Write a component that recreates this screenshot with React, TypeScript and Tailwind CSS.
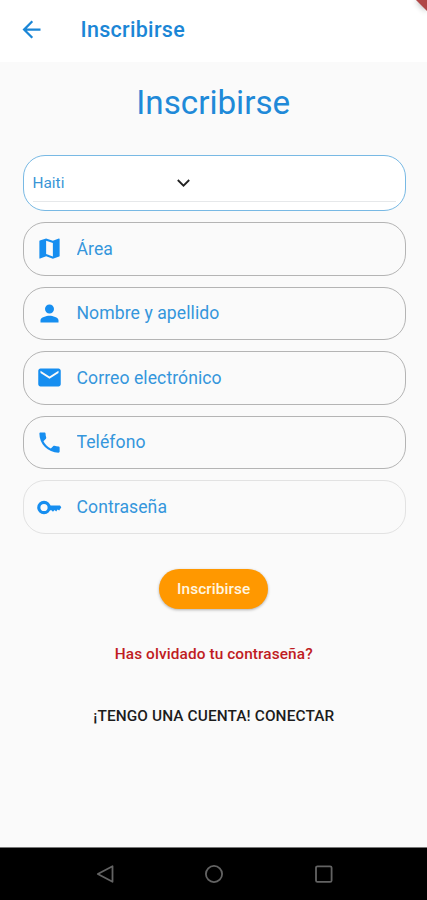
import type { ComponentType } from 'react';
import { MdArrowBack, MdEmail, MdMap, MdPerson, MdPhone } from 'react-icons/md';
import clsx from 'clsx';

interface Field {
  label: string;
  type: string;
  icon: ComponentType<{ className?: string }>;
  faint?: boolean;
}

const FIELDS: Field[] = [
  { label: 'Área', type: 'text', icon: MdMap },
  { label: 'Nombre y apellido', type: 'text', icon: MdPerson },
  { label: 'Correo electrónico', type: 'email', icon: MdEmail },
  { label: 'Teléfono', type: 'tel', icon: MdPhone },
  { label: 'Contraseña', type: 'password', icon: KeyIcon, faint: true },
];

export default function App() {
  return (
    <div className="relative flex h-[900px] w-[427px] flex-col overflow-hidden bg-[#fafafa] font-[Roboto,sans-serif]">
      <header className="flex h-[62px] shrink-0 items-center bg-white pb-[3px] pl-[18px] text-[#1b86d6]">
        <button type="button" aria-label="Atrás">
          <MdArrowBack className="size-[27px]" />
        </button>
        <h1 className="ml-[35.5px] pt-px text-[21.5px] leading-none font-medium tracking-[0.3px]">
          Inscribirse
        </h1>
      </header>
      <DebugRibbon />

      <main className="flex flex-1 flex-col pr-[21px] pl-[22.5px]">
        <h2 className="mt-[23px] pr-[2px] text-center text-[33.2px] leading-[36px] text-[#2089d8]">
          Inscribirse
        </h2>

        <div className="mt-[34px] flex flex-col gap-[11px]">
          <CountrySelect value="Haiti" />
          {FIELDS.map((f) => (
            <FieldRow key={f.label} field={f} />
          ))}
        </div>

        <div className="mt-[35px] flex flex-col items-center pr-px">
          <button
            type="button"
            className="h-[40px] w-[109px] rounded-full bg-[#ff9800] pt-[2px] text-[15.4px] font-medium tracking-[0.08px] text-[#fff6e0] shadow-[0_1px_3px_rgba(0,0,0,0.3)]"
          >
            Inscribirse
          </button>
          <button
            type="button"
            className="mt-[35px] text-[15.4px] leading-[20px] font-medium tracking-[0.1px] text-[#c01c22]"
          >
            Has olvidado tu contraseña?
          </button>
          <button
            type="button"
            className="mt-[42px] text-[15.4px] leading-[20px] font-medium tracking-[0.11px] text-[#1c1c1c]"
          >
            ¡TENGO UNA CUENTA! CONECTAR
          </button>
        </div>
      </main>

      <NavigationBar />
    </div>
  );
}

function CountrySelect({ value }: { value: string }) {
  return (
    <div className="h-[56px] rounded-[22px] border-[1.5px] border-[#78b9e4] bg-white px-[9px]">
      <button
        type="button"
        className="flex h-[46px] w-full items-center border-b border-[#e6e8ea] pt-[10px] text-[15.4px] text-[#3a95d6]"
      >
        <span className="w-[144.5px] pt-px text-left">{value}</span>
        <svg
          className="mb-px w-[13px] text-[#222]"
          viewBox="0 0 13 8"
          fill="none"
          stroke="currentColor"
          strokeWidth="1.8"
        >
          <path d="M0.8 1L6.5 6.7L12.2 1" />
        </svg>
      </button>
    </div>
  );
}

function FieldRow({ field }: { field: Field }) {
  const Icon = field.icon;
  return (
    <label
      className={clsx(
        'flex h-[53.6px] items-center rounded-[22px] border pl-[12.5px]',
        field.faint ? 'border-[#e2e2e2]' : 'border-[#b4b4b4]',
      )}
    >
      <Icon className="size-[27px] shrink-0 text-[#168ef0]" />
      <input
        type={field.type}
        placeholder={field.label}
        className="ml-[13.5px] min-w-0 flex-1 bg-transparent text-[17.6px] tracking-[0.07px] outline-none placeholder:text-[#3496dc]"
      />
    </label>
  );
}

function KeyIcon({ className }: { className?: string }) {
  return (
    <svg className={className} viewBox="0 0 27 27" fill="currentColor">
      <circle cx="8" cy="13.5" r="5.2" fill="none" stroke="currentColor" strokeWidth="3.2" />
      <path d="M13.5 11.5H24L25.3 13.2L23.2 16.6L21.6 15.6L20.2 17.6L18.6 16L17 17.8L15.4 16.2H13.5Z" />
    </svg>
  );
}

/** Corner of the debug banner, only its lower tip is on screen. */
function DebugRibbon() {
  return (
    <svg
      className="absolute top-0 right-0 drop-shadow-[0_0_3px_rgba(0,0,0,0.4)]"
      width="11"
      height="12"
      viewBox="0 0 11 12"
    >
      <path d="M0 0H11V11Z" fill="#b04545" />
    </svg>
  );
}

function NavigationBar() {
  return (
    <nav className="flex h-[53px] shrink-0 items-center justify-center gap-[89.5px] border-t border-[#777] bg-black pl-px text-[#636363]">
      <svg width="20" height="20" viewBox="0 0 20 20" fill="none" stroke="currentColor" strokeWidth="1.8" strokeLinejoin="round">
        <path d="M17.5 2.2V17.8L2.8 10Z" />
      </svg>
      <svg width="20" height="20" viewBox="0 0 20 20" fill="none" stroke="currentColor" strokeWidth="1.8">
        <circle cx="10" cy="10" r="8.1" />
      </svg>
      <svg width="20" height="20" viewBox="0 0 20 20" fill="none" stroke="currentColor" strokeWidth="1.8">
        <rect x="2" y="2.3" width="15.6" height="15.6" rx="1.5" />
      </svg>
    </nav>
  );
}
